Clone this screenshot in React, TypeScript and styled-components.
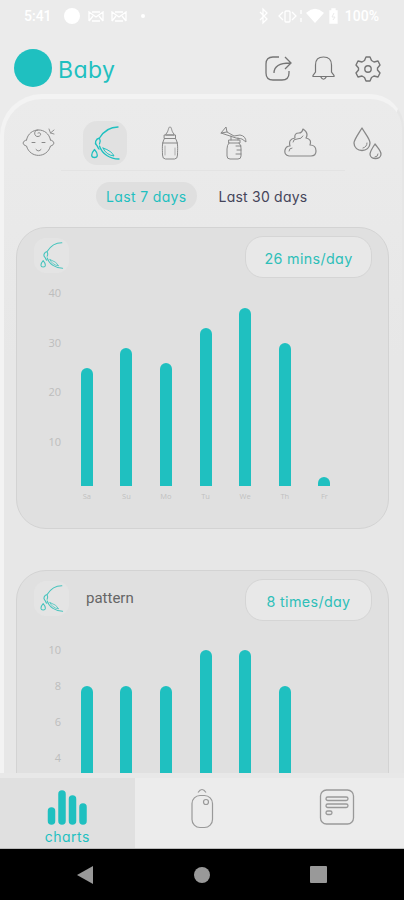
import * as React from 'react';
import styled, { createGlobalStyle, ThemeProvider } from 'styled-components';

const theme = {
	teal: '#1fc0c0',
	bckgColor: '#ebebeb',
	cardColor: '#e0e0e0',
	iconColor: '#888',
	rounded: "'Inter', 'Lato', sans-serif",
};

const GlobalStyle = createGlobalStyle`
	* {
		box-sizing: border-box;
	}
	body {
		margin: 0;
		background: #ebebeb;
		overflow: hidden;
	}
`;

interface IBar {
	day?: string;
	height: number;
}

const minutes: IBar[] = [
	{ day: 'Sa', height: 118 },
	{ day: 'Su', height: 138 },
	{ day: 'Mo', height: 123 },
	{ day: 'Tu', height: 158 },
	{ day: 'We', height: 178 },
	{ day: 'Th', height: 143 },
	{ day: 'Fr', height: 9 },
];

const times: IBar[] = [
	{ height: 144 },
	{ height: 144 },
	{ height: 144 },
	{ height: 180 },
	{ height: 180 },
	{ height: 144 },
	{ height: 0 },
];

const Screen = styled.div`
	display: flex;
	flex-direction: column;
	width: 404px;
	height: 900px;
	overflow: hidden;
	background: ${props => props.theme.bckgColor};
	font-family: ${props => props.theme.rounded};
	font-feature-settings: 'cv11';
`;

const StatusBar = styled.div`
	display: flex;
	flex: none;
	align-items: center;
	justify-content: space-between;
	height: 31px;
	padding: 0 25px 0 24px;
	color: #fff;
	font: 500 14px Roboto, sans-serif;
`;

const StatusGroup = styled.div<{ $gap: number }>`
	display: flex;
	align-items: center;
	gap: ${props => props.$gap}px;
`;

const Header = styled.header`
	display: flex;
	flex: none;
	align-items: center;
	height: 63px;
	padding: 11px 22px 0 14px;
`;

const Avatar = styled.div`
	width: 38px;
	height: 38px;
	border-radius: 50%;
	background: ${props => props.theme.teal};
`;

const Name = styled.h1`
	flex: 1;
	margin: 4px 0 0 6px;
	color: ${props => props.theme.teal};
	font-size: 23px;
	font-weight: 400;
	letter-spacing: 0.4px;
`;

const Actions = styled.div`
	display: flex;
	gap: 17px;
	margin-top: 2px;
	color: #757575;

	svg {
		display: block;
	}
`;

const Panel = styled.main`
	flex: 1;
	min-height: 0;
	overflow: hidden;
	border: 5px solid #f3f3f3;
	border-width: 5px 2px 0 4px;
	border-right-color: #e6e6e6;
	border-radius: 42px 34px 0 0;
	background: linear-gradient(#ebebeb, #e7e7e7 260px);
`;

const Categories = styled.div`
	display: flex;
	align-items: center;
	justify-content: space-between;
	height: 71px;
	padding: 17px 13px 0 13px;
`;

const Category = styled.div<{ $active?: boolean }>`
	display: flex;
	align-items: center;
	justify-content: center;
	width: 44px;
	height: 44px;
	border-radius: 14px;
	color: ${props => (props.$active ? props.theme.teal : props.theme.iconColor)};
	background: ${props => (props.$active ? '#e1e1e1' : 'transparent')};
`;

const Divider = styled.hr`
	width: 284px;
	height: 1px;
	margin: 0 auto;
	border: 0;
	background: #e3e3e3;
`;

const Periods = styled.div`
	display: flex;
	gap: 12px;
	padding: 11px 0 17px 92px;
`;

const Period = styled.div<{ $active?: boolean }>`
	height: 28px;
	padding: 0 10px;
	border-radius: 14px;
	font-size: 14px;
	letter-spacing: ${props => (props.$active ? '0.35px' : '0.22px')};
	line-height: 30px;
	white-space: nowrap;
	color: ${props => (props.$active ? props.theme.teal : '#45455a')};
	background: ${props => (props.$active ? '#dfdfdf' : 'transparent')};
`;

const Card = styled.section`
	width: 373px;
	height: 302px;
	margin: 0 0 41px 12px;
	border: 1px solid #d3d3d3;
	border-radius: 30px;
	background: ${props => props.theme.cardColor};
`;

const CardHead = styled.div`
	display: flex;
	align-items: flex-start;
	height: 57px;
	padding: 8px 16px 0 17px;
`;

const CardIcon = styled.div`
	display: flex;
	align-items: center;
	justify-content: center;
	width: 35px;
	height: 35px;
	margin-top: 2px;
	border-radius: 12px;
	background: #e4e4e4;
	color: #45c4bd;
`;

const CardTitle = styled.div`
	flex: 1;
	padding: 10px 0 0 17px;
	color: #666;
	font: 15px/18px Roboto, sans-serif;
`;

const Badge = styled.div`
	width: 127px;
	height: 42px;
	border: 1px solid #d5d5d5;
	border-radius: 18px;
	background: #e8e8e8;
	color: #2fbfb9;
	font-size: 14.3px;
	letter-spacing: 0.35px;
	line-height: 43px;
	text-align: center;
`;

const Plot = styled.div`
	display: flex;
	height: 220px;
`;

const Axis = styled.div<{ $step: number; $top: number }>`
	width: 44px;
	padding-top: ${props => props.$top}px;
	color: #bdbdbd;
	font: 11px 'Open Sans', sans-serif;
	text-align: right;

	div {
		height: ${props => props.$step}px;
		line-height: 16px;
	}
`;

const Bars = styled.div<{ $base: number }>`
	display: flex;
	align-items: flex-end;
	height: ${props => props.$base}px;
	padding-left: 6px;
`;

const Column = styled.div`
	display: flex;
	flex-direction: column;
	align-items: center;
	width: 39.6px;
`;

const Bar = styled.div`
	width: 12px;
	border-radius: 6px 6px 0 0;
	background: ${props => props.theme.teal};
`;

const Day = styled.div`
	height: 18px;
	color: #c0c0c0;
	font: 7.5px/20px 'Open Sans', sans-serif;
`;

const TabBar = styled.nav`
	display: flex;
	flex: none;
	height: 76px;
	border-top: 5px solid #e8e8e8;
	border-bottom: 1px solid #bbb;
`;

const Tab = styled.div<{ $active?: boolean }>`
	display: flex;
	flex: 1;
	flex-direction: column;
	align-items: center;
	padding-top: ${props => (props.$active ? 12 : 10)}px;
	color: ${props => (props.$active ? props.theme.teal : '#999')};
	background: ${props => (props.$active ? '#e0e0e0' : '#ececec')};
	font-size: 14px;
	line-height: 21px;
	letter-spacing: 0.5px;

	svg {
		display: block;
		flex: none;
	}
`;

const SystemBar = styled.div`
	display: flex;
	flex: none;
	align-items: center;
	justify-content: space-between;
	height: 51px;
	padding: 0 77px 0 77px;
	background: #000;
`;

const Icon = ({ size = 34, children }: { size?: number; children: React.ReactNode }) => (
	<svg
		width={size}
		height={size}
		viewBox="0 0 34 34"
		fill="none"
		stroke="currentColor"
		strokeWidth="1"
		strokeLinecap="round"
		strokeLinejoin="round"
	>
		{children}
	</svg>
);

const BabyIcon = () => (
	<Icon>
		<path d="M4.500 14C7 0.500 26 0.500 28.500 14M4.500 14C0 15 0 19 4.500 20C8 32.500 25 32.500 28.500 20C33 19 33 15 28.500 14" />
		<path d="M16 4C11 4 12 11 16 10.500C20 10 19 5.500 16 7" />
		<path d="M10 16.500H13M20 16.500H23M14 23.500Q16.500 26.500 19 23.500" />
		<path d="M27 3L28.500 7L32 8M28.500 7L32 4" strokeWidth="0.900" />
	</Icon>
);

const BreastIcon = ({ size = 34 }: { size?: number }) => (
	<Icon size={size}>
		<path d="M30 1C20 1 14 8 11.500 12C7.500 13 6.500 17 8.500 19C10 20.500 9.500 22 11 23" strokeWidth="1.400" />
		<path d="M11.500 12.500Q13 15 11.500 18M11.500 20C14 28 22 33 31 33" strokeWidth="1.300" />
		<path d="M15 22Q24 25 26 30Q18 29 15 22" strokeWidth="1" />
		<path d="M6.500 23.500C2.500 28 3 31.500 6.500 31.500C10 31.500 10.500 28 6.500 23.500Z" strokeWidth="1.300" />
	</Icon>
);

const BottleIcon = () => (
	<Icon>
		<path d="M13 8C16 5 15 1 17 1S18 5 21 8V9H13ZM11.500 9H22.500V12.500H11.500ZM11.500 12.500C8.500 17 9.500 23 9.500 29Q9.500 33 12.500 33H21.500Q24.500 33 24.500 29C24.500 23 25.500 17 22.500 12.500M9.500 17H24.500" />
		<path d="M12 20V29M22 22V29" strokeWidth="0.600" />
	</Icon>
);

const PumpIcon = () => (
	<Icon>
		<path d="M2 7L7 1L8 6L15 10L21 9Q27 10 27 16Q24 12 17 12L2 7L8 6M12 10V14M19 12V14M10 14H21V17H10ZM10 17Q8 19 8 23V30Q8 33 11 33H19Q22 33 22 30V22Q22 19 20 17M17 20H22M18 24H22M17 28H22" />
	</Icon>
);

const DiaperIcon = () => (
	<Icon>
		<path d="M5 30Q0 29 1 24Q2 20 6 20Q4 13 11 12Q10 7 15 7Q18 7 19 3Q25 7 22 12Q28 13 26 19Q32 19 32 25Q32 30 27 30Z" strokeWidth="1.200" />
		<path d="M9 16Q9 13 13 13Q18 13 19 10M5 25Q5 22 8 22" />
	</Icon>
);

const DropsIcon = () => (
	<Icon>
		<path
			d="M12 2C7 10 4 14 4 17C4 27 20 27 20 17C20 13 16 9 12 2ZM25 18C21 24 20 26 20 28C20 34 31 34 31 28C31 25 28 22 25 18Z"
			strokeWidth="1.300"
		/>
		<path d="M17 17Q17 21 13 22M28 28Q28 31 25 31" />
	</Icon>
);

const ShareIcon = () => (
	<svg width="28" height="28" viewBox="0 0 28 28" fill="none" stroke="currentColor" strokeWidth="1.300">
		<path d="M15 2H9Q2 2 2 9V18Q2 25 9 25H18Q25 25 25 18V16M10 18Q10 8 26 8M21 2L27 8L21 14" />
	</svg>
);

const BellIcon = () => (
	<svg width="28" height="28" viewBox="0 0 28 28" fill="none" stroke="currentColor" strokeWidth="1.200">
		<path d="M6.500 17V10Q6.500 2 14.500 2T22.500 10V17L25 20.500V21.500H4V20.500ZM11.500 21.500Q14.500 27 17.500 21.500" />
	</svg>
);

const GearIcon = () => (
	<svg width="28" height="28" viewBox="0 0 28 28" fill="none" stroke="currentColor" strokeWidth="1.400" strokeLinejoin="round">
		<path d="M12 2H16L17.500 5.500L20 7L24 6L26 10L23.500 13V15L26 18L24 22L20 21L17.500 22.500L16 26H12L10.500 22.500L8 21L4 22L2 18L4.500 15V13L2 10L4 6L8 7L10.500 5.500Z" />
		<circle cx="14" cy="14" r="3.200" />
	</svg>
);

const MailIcon = () => (
	<svg width="16" height="13" viewBox="0 0 16 13" fill="none" stroke="#fff" strokeWidth="1.300">
		<path d="M1 11V2L8 7L15 2V11M1 11L5 6M15 11L11 6M4 11H12M4 2H12" />
	</svg>
);

interface IChartCardProps {
	title?: string;
	badge: string;
	ticks: number[];
	step: number;
	top: number;
	base: number;
	data: IBar[];
}

const ChartCard = ({ title, badge, ticks, step, top, base, data }: IChartCardProps) => (
	<Card>
		<CardHead>
			<CardIcon>
				<BreastIcon size={27} />
			</CardIcon>
			<CardTitle>{title}</CardTitle>
			<Badge>{badge}</Badge>
		</CardHead>
		<Plot>
			<Axis $step={step} $top={top}>
				{ticks.map(tick => (
					<div key={tick}>{tick}</div>
				))}
			</Axis>
			<Bars $base={base}>
				{data.map((item, index) => (
					<Column key={index}>
						<Bar style={{ height: item.height }} />
						{item.day && <Day>{item.day}</Day>}
					</Column>
				))}
			</Bars>
		</Plot>
	</Card>
);

const App = () => (
	<ThemeProvider theme={theme}>
		<GlobalStyle />
		<Screen>
			<StatusBar>
				<StatusGroup $gap={7}>
					<span>5:41</span>
					<svg width="96" height="18" viewBox="0 0 96 18">
						<circle cx="13" cy="9" r="8" fill="#fff" />
						<g transform="translate(29 3)">
							<MailIcon />
						</g>
						<g transform="translate(52 3)">
							<MailIcon />
						</g>
						<circle cx="84" cy="9" r="2" fill="#fff" />
					</svg>
				</StatusGroup>
				<StatusGroup $gap={5}>
					<svg width="82" height="18" viewBox="0 0 82 18" fill="none" stroke="#fff" strokeWidth="1.300">
						<path d="M2 5L9 12L5 16V2L9 6L2 13" />
						<path d="M25 5L21 9L25 13M34 5L38 9L34 13" />
						<rect x="27" y="4" width="5" height="11" rx="1" />
						<path d="M43 3V7M43 11V15" />
						<path d="M49 6Q57 -1 65 6L57 15Z" fill="#fff" />
						<path d="M72 4H74V2H77V4H79V16H72Z" fill="#fff" />
						<path d="M76 6L74 10H77L75 13" stroke="#ebebeb" strokeWidth="1" />
					</svg>
					<span>100%</span>
				</StatusGroup>
			</StatusBar>
			<Header>
				<Avatar />
				<Name>Baby</Name>
				<Actions>
					<ShareIcon />
					<BellIcon />
					<GearIcon />
				</Actions>
			</Header>
			<Panel>
				<Categories>
					<Category>
						<BabyIcon />
					</Category>
					<Category $active={true}>
						<BreastIcon />
					</Category>
					<Category>
						<BottleIcon />
					</Category>
					<Category>
						<PumpIcon />
					</Category>
					<Category>
						<DiaperIcon />
					</Category>
					<Category>
						<DropsIcon />
					</Category>
				</Categories>
				<Divider />
				<Periods>
					<Period $active={true}>Last 7 days</Period>
					<Period>Last 30 days</Period>
				</Periods>
				<ChartCard badge="26 mins/day" ticks={[40, 30, 20, 10]} step={49.7} top={0} base={219} data={minutes} />
				<ChartCard title="pattern" badge="8 times/day" ticks={[10, 8, 6, 4]} step={36} top={14} base={202} data={times} />
			</Panel>
			<TabBar>
				<Tab $active={true}>
					<svg width="40" height="36" viewBox="0 0 40 36" stroke="currentColor" strokeWidth="7.500" strokeLinecap="round">
						<path d="M4.500 21V31M15 4V31M25.500 9V31M36 17V31" />
					</svg>
					charts
				</Tab>
				<Tab>
					<svg width="24" height="42" viewBox="0 0 24 42" fill="none" stroke="currentColor" strokeWidth="1.200">
						<rect x="2" y="7.500" width="20.500" height="32" rx="8" />
						<path d="M8 4.500Q12 -1.500 16 4.500" />
						<circle cx="16" cy="14" r="2.500" />
					</svg>
				</Tab>
				<Tab>
					<svg width="36" height="38" viewBox="0 0 36 38" fill="none" stroke="currentColor" strokeWidth="1.300">
						<rect x="1.500" y="2" width="33" height="34" rx="6" />
						<rect x="7" y="9" width="22" height="3.500" rx="1.750" />
						<rect x="7" y="16" width="22" height="3.500" rx="1.750" />
						<rect x="7" y="23" width="6" height="3.500" rx="1.750" />
					</svg>
				</Tab>
			</TabBar>
			<SystemBar>
				<svg width="17" height="20" viewBox="0 0 17 20" fill="#999">
					<path d="M0 10L16 1V19Z" />
				</svg>
				<svg width="16" height="16" viewBox="0 0 16 16" fill="#999">
					<circle cx="8" cy="8" r="8" />
				</svg>
				<svg width="17" height="17" viewBox="0 0 17 17" fill="#999">
					<rect width="17" height="17" rx="1" />
				</svg>
			</SystemBar>
		</Screen>
	</ThemeProvider>
);

export default App;
